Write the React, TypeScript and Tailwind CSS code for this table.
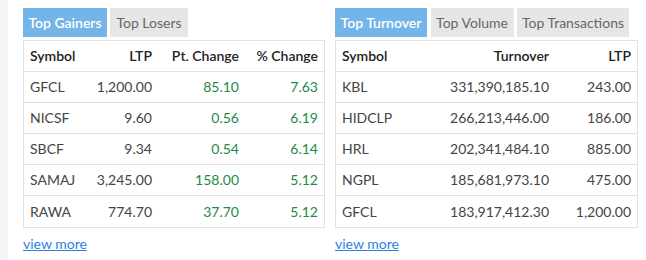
import type { ReactNode } from "react";

type Cell = { text: string; green?: boolean };

const gainers: Cell[][] = [
  [{ text: "GFCL" }, { text: "1,200.00" }, { text: "85.10", green: true }, { text: "7.63", green: true }],
  [{ text: "NICSF" }, { text: "9.60" }, { text: "0.56", green: true }, { text: "6.19", green: true }],
  [{ text: "SBCF" }, { text: "9.34" }, { text: "0.54", green: true }, { text: "6.14", green: true }],
  [{ text: "SAMAJ" }, { text: "3,245.00" }, { text: "158.00", green: true }, { text: "5.12", green: true }],
  [{ text: "RAWA" }, { text: "774.70" }, { text: "37.70", green: true }, { text: "5.12", green: true }],
];

const turnover: Cell[][] = [
  [{ text: "KBL" }, { text: "331,390,185.10" }, { text: "243.00" }],
  [{ text: "HIDCLP" }, { text: "266,213,446.00" }, { text: "186.00" }],
  [{ text: "HRL" }, { text: "202,341,484.10" }, { text: "885.00" }],
  [{ text: "NGPL" }, { text: "185,681,973.10" }, { text: "475.00" }],
  [{ text: "GFCL" }, { text: "183,917,412.30" }, { text: "1,200.00" }],
];

type TabDef = { label: string; w: string };

function Tab({ label, w, active }: TabDef & { active?: boolean }) {
  return (
    <div
      className={`flex h-[29px] shrink-0 items-center justify-center whitespace-nowrap ${w} ${
        active ? "bg-[#73b5e8] font-semibold text-white" : "bg-[#e6e6e6] text-[#666]"
      }`}
    >
      {label}
    </div>
  );
}

function Row({ cols, children, head }: { cols: string; children: ReactNode; head?: boolean }) {
  return (
    <div
      className={`grid h-[31px] items-center border-b border-[#e1e1e1] last:border-b-0 ${cols} ${
        head ? "font-semibold text-[#222]" : "text-[#444]"
      }`}
    >
      {children}
    </div>
  );
}

function Panel({
  tabs,
  gap,
  cols,
  headers,
  rows,
}: {
  tabs: TabDef[];
  gap: string;
  cols: string;
  headers: string[];
  rows: Cell[][];
}) {
  return (
    <div className="flex flex-col">
      <div className={`flex ${gap}`}>
        {tabs.map((t, i) => (
          <Tab key={t.label} {...t} active={i === 0} />
        ))}
      </div>
      <div className="mt-[3px] border border-[#e1e1e1]">
        <Row cols={cols} head>
          {headers.map((h, i) => (
            <div key={h} className={`whitespace-nowrap px-[6px] ${i === 0 ? "text-left" : "text-right"}`}>
              {h}
            </div>
          ))}
        </Row>
        {rows.map((r) => (
          <Row key={r[0].text} cols={cols}>
            {r.map((c, i) => (
              <div
                key={i}
                className={`whitespace-nowrap px-[6px] ${i === 0 ? "text-left" : "text-right"} ${
                  c.green ? "text-[#1d8a45]" : ""
                }`}
              >
                {c.text}
              </div>
            ))}
          </Row>
        ))}
      </div>
      <a href="#" className="mt-[9px] self-start text-[#2a7fe4] underline">
        view more
      </a>
    </div>
  );
}

export default function App() {
  return (
    <div
      className="flex h-[260px] w-[646px] bg-white text-[14px] leading-none"
      style={{ fontFamily: "Lato, 'Noto Sans', sans-serif" }}
    >
      <div className="w-[8px] shrink-0 bg-[#f3f3f8]" />
      <div className="ml-[15px] flex gap-[10px] pt-[8px]">
        <div className="w-[302px]">
          <Panel
            tabs={[
              { label: "Top Gainers", w: "w-[84px]" },
              { label: "Top Losers", w: "w-[78px]" },
            ]}
            gap="gap-[3px]"
            cols="grid-cols-[56px_78px_87px_79px]"
            headers={["Symbol", "LTP", "Pt. Change", "% Change"]}
            rows={gainers}
          />
        </div>
        <div className="w-[303px]">
          <Panel
            tabs={[
              { label: "Top Turnover", w: "w-[92px]" },
              { label: "Top Volume", w: "w-[83px]" },
              { label: "Top Transactions", w: "w-[112px]" },
            ]}
            gap="gap-[3.5px]"
            cols="grid-cols-[100px_119px_82px]"
            headers={["Symbol", "Turnover", "LTP"]}
            rows={turnover}
          />
        </div>
      </div>
    </div>
  );
}
